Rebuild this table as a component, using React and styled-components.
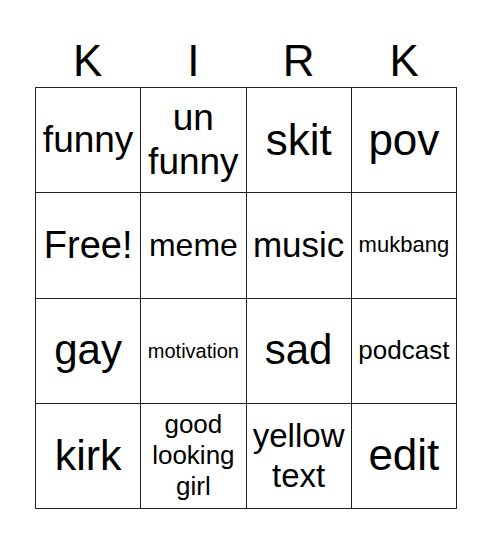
import styled, { createGlobalStyle } from 'styled-components';

const GlobalStyle = createGlobalStyle`
  body {
    margin: 0;
    background: #fff;
    font-family: "Liberation Sans", Arial, sans-serif;
    color: #000;
  }
`;

const Page = styled.div`
  width: 492px;
  height: 544px;
  padding-top: 36px;
  box-sizing: border-box;
  display: flex;
  flex-direction: column;
  align-items: center;
`;

const Header = styled.div`
  width: 422px;
  height: 51px;
  display: grid;
  grid-template-columns: repeat(4, 1fr);
`;

const Letter = styled.div`
  font-size: 44px;
  line-height: 1.15;
  text-align: center;
`;

const Board = styled.div`
  width: 422px;
  height: 422px;
  box-sizing: border-box;
  display: grid;
  grid-template-columns: repeat(4, 1fr);
  grid-template-rows: repeat(4, 1fr);
  border-top: 1px solid #222;
  border-left: 1px solid #222;
`;

const Cell = styled.div`
  display: flex;
  align-items: center;
  justify-content: center;
  text-align: center;
  border-right: 1px solid #222;
  border-bottom: 1px solid #222;
  padding: 0 2px;
  font-size: ${(p) => p.size}px;
  line-height: 1.2;
  overflow: hidden;
`;

const cells = [
  ['funny', 37], ['un funny', 37], ['skit', 44], ['pov', 44],
  ['Free!', 38], ['meme', 32], ['music', 35], ['mukbang', 22],
  ['gay', 42], ['motivation', 20], ['sad', 42], ['podcast', 26],
  ['kirk', 43], ['good looking girl', 26], ['yellow text', 33], ['edit', 44],
];

export default function App() {
  return (
    <Page>
      <GlobalStyle />
      <Header>
        {['K', 'I', 'R', 'K'].map((l, i) => (
          <Letter key={i}>{l}</Letter>
        ))}
      </Header>
      <Board>
        {cells.map(([text, size], i) => (
          <Cell key={i} size={size}>{text}</Cell>
        ))}
      </Board>
    </Page>
  );
}
